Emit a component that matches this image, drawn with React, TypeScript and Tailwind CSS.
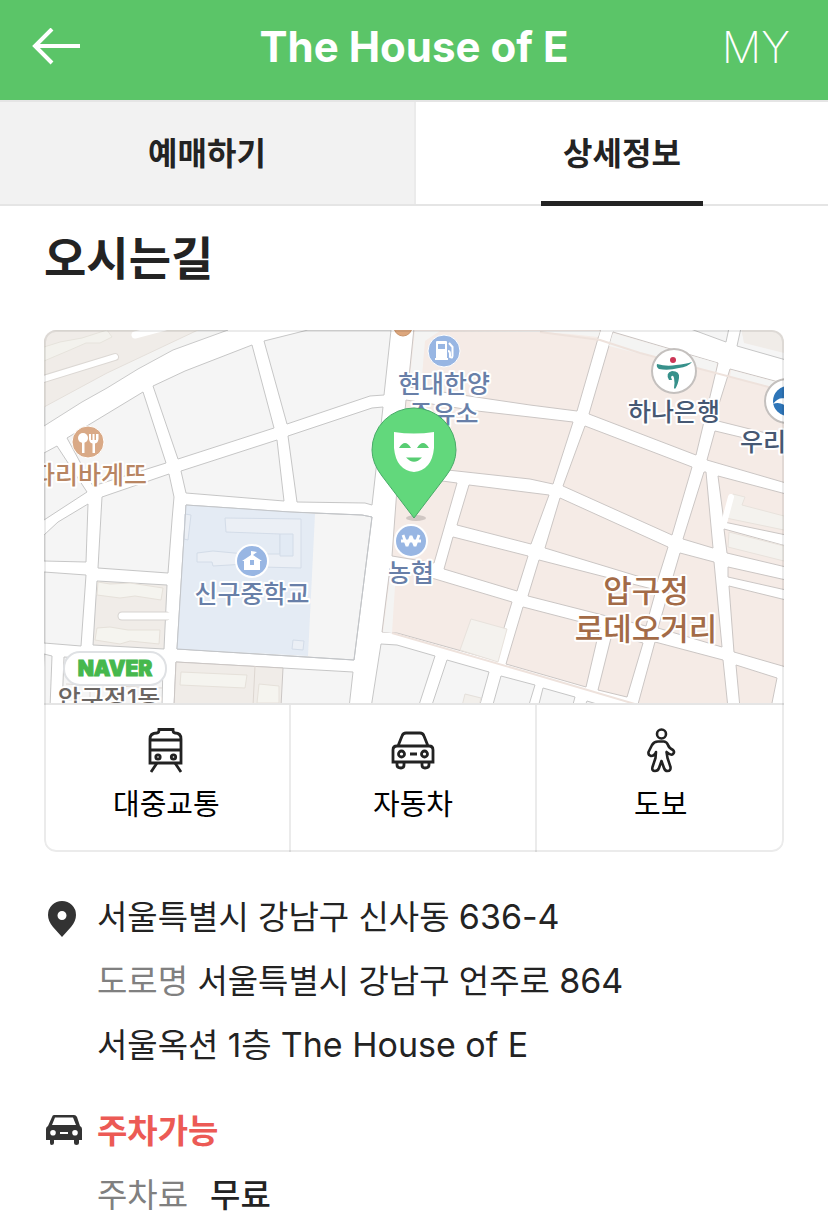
import type { ReactNode } from "react";

const GRAY_BLOCKS = [
  "153,386 185,371 252,345 274,428 178,459",
  "67,438 143,392 166,463 93,486",
  "44,453 57,446 87,492 44,520",
  "102,497 169,474 174,497 172,520 168,573 98,568",
  "88,504 58,522 44,535 44,561 86,562",
  "44,572 86,575 81,646 44,643",
  "186,505 290,512 362,515 372,517 354,660 177,649",
  "181,471 277,440 284,501 186,493",
  "264,341 308,330 391,330 384,395 370,396 287,424",
  "288,436 372,408 383,407 372,505 365,503 297,502",
  "176,662 353,672 349,708 174,708",
  "381,644 397,645 435,656 418,708 371,708",
  "447,660 489,672 479,708 431,708",
  "501,676 535,685 528,708 492,708",
  "543,688 575,697 572,708 538,708",
  "587,701 610,708 584,708",
  "688,328 726,342 729,328",
  "741,328 737,346 786,360 786,328",
  "44,654 52,656 50,708 42,708",
  "64,657 163,663 162,708 62,708",
];

const PINK_BLOCKS = [
  "414,328 601,328 577,411 530,405 408,387",
  "406,400 477,411 530,417 573,422 553,484 530,479 457,471 400,465",
  "398,475 457,483 434,563 392,556",
  "469,485 549,495 531,544 457,525",
  "453,537 528,556 517,591 444,569",
  "390,568 435,579 512,602 494,660 397,633 382,632",
  "523,607 600,627 586,687 506,664",
  "539,560 656,590 646,626 528,596",
  "560,498 668,547 657,582 545,548",
  "585,426 692,467 672,535 563,486",
  "613,332 718,363 696,455 589,414",
  "730,369 786,384 786,438 714,420",
  "715,431 786,448 786,483 707,460",
  "718,476 786,494 786,535 724,522",
  "724,529 786,546 786,567 727,553",
  "728,567 786,580 786,590 728,577",
  "729,586 786,600 786,667 734,652",
  "736,665 777,678 771,708 740,708",
  "704,472 706,472 713,548 683,539",
  "680,553 714,562 722,647 658,628",
  "655,642 723,660 728,708 637,708",
  "612,634 643,643 627,697 598,690",
];

const sans = "font-['Inter','Noto_Sans_CJK_KR',sans-serif]";

function MapLabel({ x, y, color, size = 25, anchor = "middle", children }: {
  x: number;
  y: number;
  color: string;
  size?: number;
  anchor?: "start" | "middle" | "end";
  children: ReactNode;
}) {
  return (
    <text
      x={x}
      y={y}
      fill={color}
      fontSize={size}
      textAnchor={anchor}
      stroke="#ffffff"
      strokeWidth={4}
      strokeLinejoin="round"
      paintOrder="stroke"
      className="font-medium"
    >
      {children}
    </text>
  );
}

function VenueMap() {
  return (
    <svg viewBox="44 330 740 375" className="block w-full" role="img" aria-label="오시는길 지도">
      <rect x="44" y="330" width="740" height="376" fill="#ffffff" />

      {/* north-west riverside */}
      <path d="M44 426L82 402L107 388L138 369L173 350L228 330H44Z" fill="#f4f4f3" stroke="#c9c9c9" />
      <path d="M44 407L107 373L198 330H44Z" fill="#f0ece8" stroke="#e4dfda" />
      <path d="M44 347L60 342L82 338L107 330L112 337L100 343L86 343L70 350L44 361Z" fill="#f3f2ed" stroke="#e6e3dc" />
      <path d="M40 380L115 357" stroke="#dcd8d4" strokeWidth="8" strokeLinecap="round" />
      <path d="M40 380L115 357" stroke="#ffffff" strokeWidth="6" strokeLinecap="round" />
      <path d="M135 335L165 327" stroke="#ffffff" strokeWidth="7" strokeLinecap="round" />

      <g fill="#f5f5f5" stroke="#c6c6c6" strokeWidth="1">
        {GRAY_BLOCKS.map((points) => (
          <polygon key={points} points={points} />
        ))}
      </g>
      <g fill="#f5ebe6" stroke="#cbc6c4" strokeWidth="1">
        {PINK_BLOCKS.map((points) => (
          <polygon key={points} points={points} />
        ))}
      </g>

      {/* paler edges of the shopping district */}
      <path d="M415 331H600L598 337L570 334L540 332L440 331L425 341L421 388L409 386Z" fill="#f4f4f3" />
      <path d="M613 333L717 363L715 373L609 346Z" fill="#f4f4f3" />
      <path d="M731 370L784 384V391L730 377Z" fill="#f4f4f3" />
      <path d="M391 569L396 570L392 633L383 632Z" fill="#f4f4f3" />
      <path d="M540 332L600 340L640 353L784 391" fill="none" stroke="#eee2dc" strokeWidth="2" />
      <path d="M392 633L530 673L645 707" fill="none" stroke="#eee2dc" strokeWidth="2" />
      <path d="M471 619L507 629L498 662L460 650Z" fill="#f4f2ee" stroke="#e8e2dc" />
      <path d="M465 694L481 698L479 706H462Z" fill="#f2efeb" stroke="#e4dfda" />
      <path d="M741 328L744 343L784 353V328Z" fill="#f0ece8" />

      {/* apartments */}
      <path d="M97 581L167 585L164 649L93 645Z" fill="#f0ece8" stroke="#c6c6c6" />
      <path d="M98 582L110 584L130 583L163 588L161 600L135 596L120 598L97 595Z" fill="#f5f4ef" stroke="#e6e1da" />
      <path d="M97 628L110 627L128 630L160 630L159 644L130 641L120 644L95 640Z" fill="#f5f4ef" stroke="#e6e1da" />
      <path d="M122 616H166" stroke="#d5d2cf" strokeWidth="9" strokeLinecap="round" />
      <path d="M122 616H169" stroke="#ffffff" strokeWidth="7" strokeLinecap="round" />
      <path d="M176 662L283 668L281 706H174Z" fill="#f0ece8" stroke="#cbc6c4" />
      <path d="M181 672L247 675L245 688L180 685ZM259 684L279 686V703H257Z" fill="#f5f4ef" stroke="#e6e1da" />
      <path d="M255 666L253 706" stroke="#ddd6d0" />
      <path d="M66 684L162 688M90 684V706M122 686V706M142 686V706" stroke="#dfd9d4" />
      <path d="M733 494L745 497L742 505L784 516V530L726 518Z" fill="#f4f2ee" stroke="#e8e2dc" />
      <path d="M729 532L784 546V561L728 547Z" fill="#f4f2ee" stroke="#e8e2dc" />
      <path d="M731 497L724 523" stroke="#ffffff" strokeWidth="6" strokeLinecap="round" />

      {/* school grounds */}
      <path d="M186 505L290 512L315 514L308 656L177 649Z" fill="#e4ebf4" />
      <path
        d="M225 518L301 519V568L262 567L246 564L213 566L212 562H197V553L213 551L245 554H280V534L226 532ZM185 514L191 515L188 540L184 539ZM293 640L304 641L303 650L292 649Z"
        fill="#ebeff5"
        stroke="#d3dce8"
      />
      <path d="M280 534H293V556H280Z" fill="#e2eaf4" stroke="#d3dce8" />
      <path d="M186 505L290 512L362 515L372 517L354 660L177 649Z" fill="none" stroke="#c2c5c9" />

      {/* points of interest */}
      <circle cx="403" cy="327" r="9" fill="#dda77d" stroke="#c99369" />

      <circle cx="88" cy="442" r="16" fill="#d9a986" stroke="#ffffff" strokeWidth="1" />
      <g fill="#ffffff">
        <circle cx="83" cy="438" r="5" />
        <path d="M82 441H84.500V453H82ZM89 434H91V440H92.500V434H94.500V440H96V434H98.500V439Q98 443 95 443.500V453H92.500V443.500Q89.500 443 89 439Z" />
      </g>

      <circle cx="444" cy="351" r="16" fill="#98b6e3" stroke="#ffffff" strokeWidth="1" />
      <path d="M436 342Q436 341 437 341H446Q447 341 447 342V358H448V360H435V358H436ZM438 344V349H445V344Z" fill="#ffffff" fillRule="evenodd" />
      <path d="M448 351Q450 351 450 354V357Q453 359 452.500 354V347L449 343" fill="none" stroke="#ffffff" strokeWidth="2" />

      <circle cx="252" cy="561" r="16" fill="#98b6e3" stroke="#ffffff" strokeWidth="2" />
      <path d="M251 551L257 552L253 555L262 561H260V570H244V561H242L251 555ZM250 560V565H254V560Z" fill="#ffffff" fillRule="evenodd" />

      <circle cx="411" cy="541" r="16" fill="#98b6e3" stroke="#ffffff" strokeWidth="2" />
      <path
        d="M403 535L407 546L411 536L415 546L419 535M401 541H421"
        fill="none"
        stroke="#ffffff"
        strokeWidth="2.8"
        strokeLinejoin="bevel"
      />

      <circle cx="674" cy="371" r="22" fill="#ffffff" stroke="#c4c0be" strokeWidth="2" />
      <circle cx="673" cy="360" r="3" fill="#cc3556" />
      <path d="M657 364Q667 367 676 365Q686 364 692 362Q688 367 679 368Q668 371 659 369Q656 367 657 364Z" fill="#37918b" />
      <path d="M669 380Q665 373 672 371Q680 371 679 378Q678 385 675 389L674 388Q675 383 674 378Q673 374 671 377L672 380Z" fill="#37918b" />

      <circle cx="787" cy="401" r="22" fill="#ffffff" stroke="#c4c0be" strokeWidth="2" />
      <circle cx="788" cy="401" r="15" fill="#2e75b8" />
      <path d="M773 404Q779 396 786 399V406Q779 401 773 404Z" fill="#ffffff" />

      <g className={sans}>
        <MapLabel x={147} y={484} color="#b88562" anchor="end">파리바게뜨</MapLabel>
        <MapLabel x={444} y={393} color="#687fa8">현대한양</MapLabel>
        <MapLabel x={444} y={423} color="#687fa8">주유소</MapLabel>
        <MapLabel x={674} y={421} color="#465873">하나은행</MapLabel>
        <MapLabel x={740} y={451} color="#465873" anchor="start">우리은행</MapLabel>
        <MapLabel x={252} y={603} color="#687fa8">신구중학교</MapLabel>
        <MapLabel x={411} y={582} color="#687fa8">농협</MapLabel>
        <MapLabel x={646} y={602} color="#a36b47" size={31}>압구정</MapLabel>
        <MapLabel x={646} y={640} color="#a36b47" size={31}>로데오거리</MapLabel>
        <MapLabel x={109} y={708} color="#6b6663">압구정1동</MapLabel>
      </g>

      <rect x="64" y="652" width="102" height="33" rx="16" fill="#ffffff" stroke="#dfe1e4" strokeWidth="2" />
      <text
        x="115"
        y="676"
        textAnchor="middle"
        fontSize="21"
        fill="#46b84d"
        stroke="#46b84d"
        strokeWidth="1"
        className={`${sans} font-black`}
      >
        NAVER
      </text>

      {/* venue pin */}
      <ellipse cx="416" cy="518" rx="10" ry="3" fill="#8b8580" opacity="0.35" />
      <path
        d="M414 518L382 476Q372 463 372 450A42 42 0 0 1 456 450Q456 463 446 476Z"
        fill="#62d87c"
        stroke="#48aa68"
        strokeWidth="1"
      />
      <path d="M394 432Q414 435 434 432V448Q432 470 414 472Q396 470 394 448Z" fill="#ffffff" />
      <path d="M399 448Q405 438 411 448ZM417 448Q423 438 429 448ZM406 457.500H422Q414 466 406 457.500Z" fill="#58cd73" />
    </svg>
  );
}

const TrainIcon = () => (
  <svg viewBox="0 0 44 46" className="h-[46px] w-11" fill="none" stroke="#222" strokeWidth="2.8">
    <path d="M6 36V12Q6 6 13 6Q15 6 15 2.500H29Q29 6 31 6Q37 6 37 12V36ZM6 13H37M6 23H37" />
    <path d="M13 36L7 45M31 36L37 45" />
    <circle cx="14" cy="30" r="2.200" />
    <circle cx="29.500" cy="30" r="2.200" />
  </svg>
);

const CarIcon = () => (
  <svg viewBox="0 0 44 46" className="h-[46px] w-11" fill="none" stroke="#222" strokeWidth="2.8">
    <path d="M2 35V23Q2 19 6 19H38Q42 19 42 23V35ZM7 19L11 9Q12 6 15 6H29Q32 6 33 9L37 19" />
    <path d="M6 35V38Q6 41 10 41Q13 41 13 38V35M31 35V38Q31 41 34 41Q38 41 38 38V35M19 27H26" />
    <circle cx="10.500" cy="27" r="3" />
    <circle cx="33.500" cy="27" r="3" />
  </svg>
);

const WalkIcon = () => (
  <svg viewBox="0 0 44 46" className="h-[46px] w-11" fill="none" stroke="#222" strokeWidth="2.6" strokeLinejoin="round">
    <circle cx="22.500" cy="7" r="4.500" />
    <path d="M19 14.500H25Q28 15 29 18Q30 21 34 23Q36 25 34 27Q32 29 27.500 25L28.500 31L31.500 40Q32 44 28.500 44Q26 44 25 41L22.500 34L20 41Q19 44 16 44Q12.500 44 13.500 40L16.500 31L17 25Q15.500 29 12 29Q9 28 9.500 25L13 18Q15 14.500 19 14.500Z" />
  </svg>
);

const ROUTES = [
  { label: "대중교통", icon: <TrainIcon /> },
  { label: "자동차", icon: <CarIcon /> },
  { label: "도보", icon: <WalkIcon /> },
];

export default function App() {
  return (
    <div className={`bg-white text-[#232323] ${sans}`}>
      <header className="grid h-[100px] grid-cols-[1fr_auto_1fr] items-center bg-[#5bc568] px-8 pb-1.5 text-white">
        <button type="button" aria-label="뒤로" className="justify-self-start">
          <svg viewBox="0 0 48 38" className="h-[38px] w-12" fill="none" stroke="#fff" strokeWidth="4">
            <path d="M48 18H3M20 1L3 18L20 35" />
          </svg>
        </button>
        <h1 className="text-[42px] leading-[48px] font-bold">The House of E</h1>
        <a href="#my" className="mr-1.5 justify-self-end text-[44px] leading-[48px] font-extralight">
          MY
        </a>
      </header>

      <nav className="grid h-[106px] grid-cols-[416fr_412fr] border-y-2 border-[#e5e5e5] text-[32px] leading-[48px] font-bold">
        <a href="#booking" className="flex items-center justify-center border-r-2 border-[#ebebeb] bg-[#f2f2f2] pt-0.5">
          예매하기
        </a>
        <a href="#detail" aria-current="page" className="relative flex items-center justify-center pt-0.5">
          상세정보
          <span className="absolute -bottom-0.5 h-[5px] w-[162px] bg-[#232323]" />
        </a>
      </nav>

      <main className="px-11">
        <h2 className="pt-4 text-[46px] leading-[72px] font-bold">오시는길</h2>

        <section className="relative mt-9 overflow-hidden rounded-xl">
          <VenueMap />
          <div className="relative -mt-0.5 grid grid-cols-3 divide-x-2 divide-[#ebebeb] border-t-2 border-[#e5e5e5] bg-white">
            {ROUTES.map(({ label, icon }) => (
              <button
                key={label}
                type="button"
                className="flex h-[147px] flex-col items-center pt-[22px] text-[29px] leading-[44px] text-black"
              >
                {icon}
                <span className="mt-2.5">{label}</span>
              </button>
            ))}
          </div>
          <div className="pointer-events-none absolute inset-0 rounded-xl border-2 border-black/8" />
        </section>

        <section className="mt-[37px] grid grid-cols-[53px_1fr] text-[33px] leading-[56px]">
          <svg viewBox="0 0 28 36" className="mt-3 ml-1 h-9 w-7" fill="#333" fillRule="evenodd">
            <path d="M14 0A14 14 0 0 1 28 14Q28 20 23 26L14 36L5 26Q0 20 0 14A14 14 0 0 1 14 0ZM14 10A4.500 4.500 0 1 0 14 19A4.500 4.500 0 1 0 14 10Z" />
          </svg>
          <address className="flex flex-col gap-2 not-italic">
            <p>
              서울특별시 강남구 신사동 <span className="text-[34px]">636-4</span>
            </p>
            <p>
              <span className="text-[#808080]">도로명</span> 서울특별시 강남구 언주로{" "}
              <span className="text-[34px]">864</span>
            </p>
            <p>
              서울옥션 1층 <span className="text-[34px]">The House of E</span>
            </p>
          </address>
        </section>

        <section className="mt-[30px] grid grid-cols-[53px_1fr] text-[33px] leading-[56px]">
          <svg viewBox="0 0 36 31" className="mt-3 ml-0.5 h-[31px] w-9" fill="#333" fillRule="evenodd">
            <path d="M8 0H28Q30 0 31 2L34 11Q36 12 36 14V25H33V28Q33 30 30.500 30Q28 30 28 28V25H8V28Q8 30 5.500 30Q4 30 4 28V25H0V14Q0 12 2 11L6 2Q6.500 0 8 0ZM9 2.500L6 10H30L27 2.500ZM7 15A2.800 2.800 0 1 0 7 20.600A2.800 2.800 0 1 0 7 15ZM29 15A2.800 2.800 0 1 0 29 20.600A2.800 2.800 0 1 0 29 15ZM14 17V19H22V17Z" />
          </svg>
          <div className="flex flex-col gap-2">
            <p className="font-bold text-[#ec5a55]">주차가능</p>
            <p className="flex gap-[22px]">
              <span className="text-[#808080]">주차료</span>
              <span className="font-medium">무료</span>
            </p>
          </div>
        </section>
      </main>
    </div>
  );
}
